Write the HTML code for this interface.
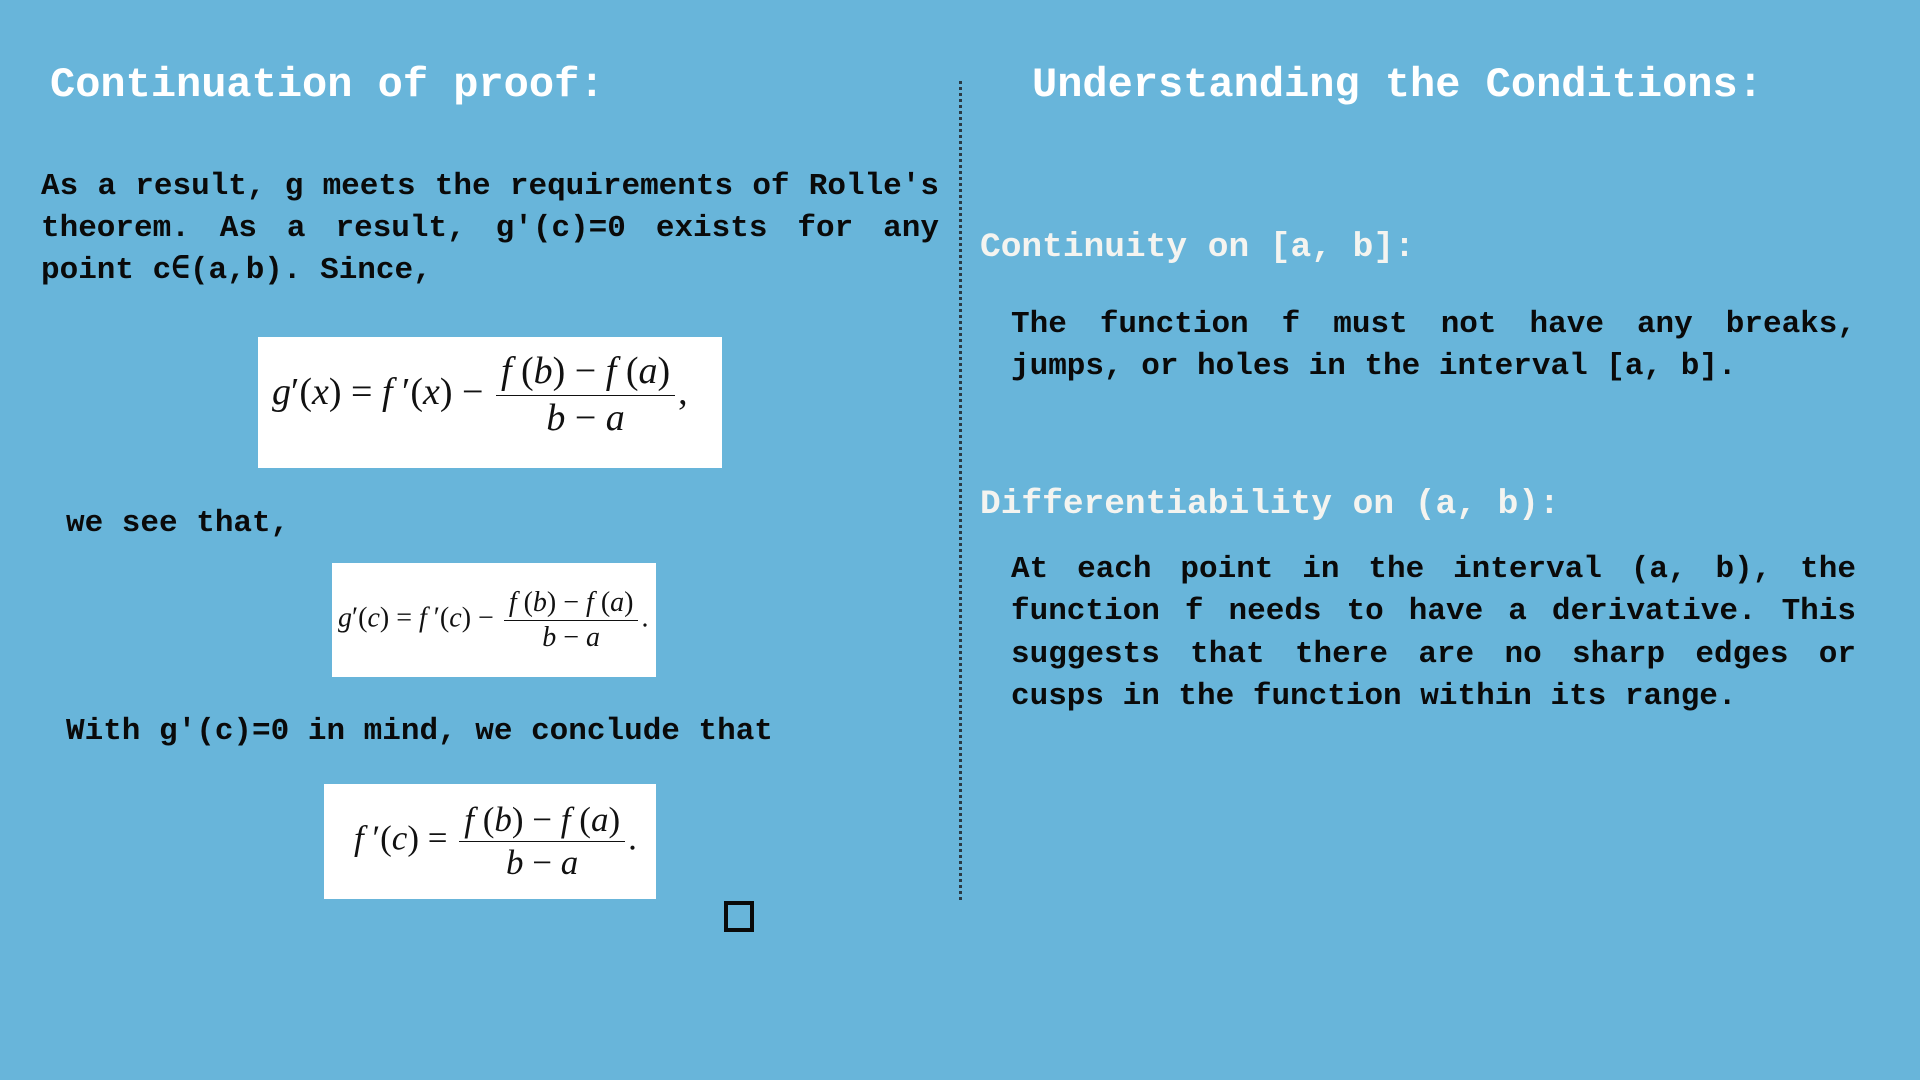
<!DOCTYPE html>
<html><head><meta charset="utf-8"><style>
*{margin:0;padding:0;box-sizing:border-box}
body{width:1920px;height:1080px;background:#68b5da;position:relative;overflow:hidden;font-family:"Liberation Mono",monospace;font-weight:bold}
.a{position:absolute;white-space:nowrap}
.t{color:#fff;font-size:42px;line-height:50px}
.h{color:#f4f4f0;font-size:34.5px;line-height:42px}
.p{color:#0a0a0a;font-size:31px;line-height:42px}
.j{text-align:justify;text-align-last:justify;white-space:normal}
.box{position:absolute;background:#fff;display:flex;align-items:center;font-family:"Liberation Serif",serif;font-weight:normal;color:#111;white-space:nowrap}
.i{font-style:italic}
.fr{display:inline-flex;flex-direction:column;align-items:center;vertical-align:middle;margin:0 3px}
.fr .n{border-bottom:1.5px solid #111;padding:0 5px;line-height:1.2}
.fr .d{line-height:1.2}
</style></head><body>
<div class="a t" style="left:50px;top:60px">Continuation of proof:</div>
<div class="a t" style="left:1032px;top:60px">Understanding the Conditions:</div>

<div class="a p j" style="left:41px;top:166px;width:898px">As a result, g meets the requirements of Rolle's</div>
<div class="a p j" style="left:41px;top:208px;width:898px">theorem. As a result, g'(c)=0 exists for any</div>
<div class="a p" style="left:41px;top:250px">point c∈(a,b). Since,</div>

<div class="box" style="left:258px;top:337px;width:464px;height:131px;padding-left:14px;font-size:38px;align-items:flex-start;padding-top:12px">
<span><span class="i">g</span>′(<span class="i">x</span>) = <span class="i">f</span> ′(<span class="i">x</span>) − <span class="fr"><span class="n"><span class="i">f</span> (<span class="i">b</span>) − <span class="i">f</span> (<span class="i">a</span>)</span><span class="d"><span class="i">b</span> − <span class="i">a</span></span></span>,</span></div>

<div class="a p" style="left:66px;top:503px">we see that,</div>

<div class="box" style="left:332px;top:563px;width:324px;height:114px;padding-left:6px;font-size:28px">
<span><span class="i">g</span>′(<span class="i">c</span>) = <span class="i">f</span> ′(<span class="i">c</span>) − <span class="fr"><span class="n"><span class="i">f</span> (<span class="i">b</span>) − <span class="i">f</span> (<span class="i">a</span>)</span><span class="d"><span class="i">b</span> − <span class="i">a</span></span></span>.</span></div>

<div class="a p" style="left:66px;top:711px">With g'(c)=0 in mind, we conclude that</div>

<div class="box" style="left:324px;top:784px;width:332px;height:115px;padding-left:30px;font-size:35px">
<span><span class="i">f</span> ′(<span class="i">c</span>) = <span class="fr"><span class="n"><span class="i">f</span> (<span class="i">b</span>) − <span class="i">f</span> (<span class="i">a</span>)</span><span class="d"><span class="i">b</span> − <span class="i">a</span></span></span>.</span></div>

<div class="a" style="left:724px;top:901px;width:30px;height:31px;border:4px solid #0a0a0a"></div>

<div class="a" style="left:959px;top:81px;height:819px;border-left:3px dotted #2a3a44"></div>

<div class="a h" style="left:980px;top:227px">Continuity on [a, b]:</div>
<div class="a p j" style="left:1011px;top:304px;width:845px">The function f must not have any breaks,</div>
<div class="a p" style="left:1011px;top:346px">jumps, or holes in the interval [a, b].</div>

<div class="a h" style="left:980px;top:484px">Differentiability on (a, b):</div>
<div class="a p j" style="left:1011px;top:549px;width:845px">At each point in the interval (a, b), the</div>
<div class="a p j" style="left:1011px;top:591px;width:845px">function f needs to have a derivative. This</div>
<div class="a p j" style="left:1011px;top:634px;width:845px">suggests that there are no sharp edges or</div>
<div class="a p" style="left:1011px;top:676px">cusps in the function within its range.</div>
</body></html>
